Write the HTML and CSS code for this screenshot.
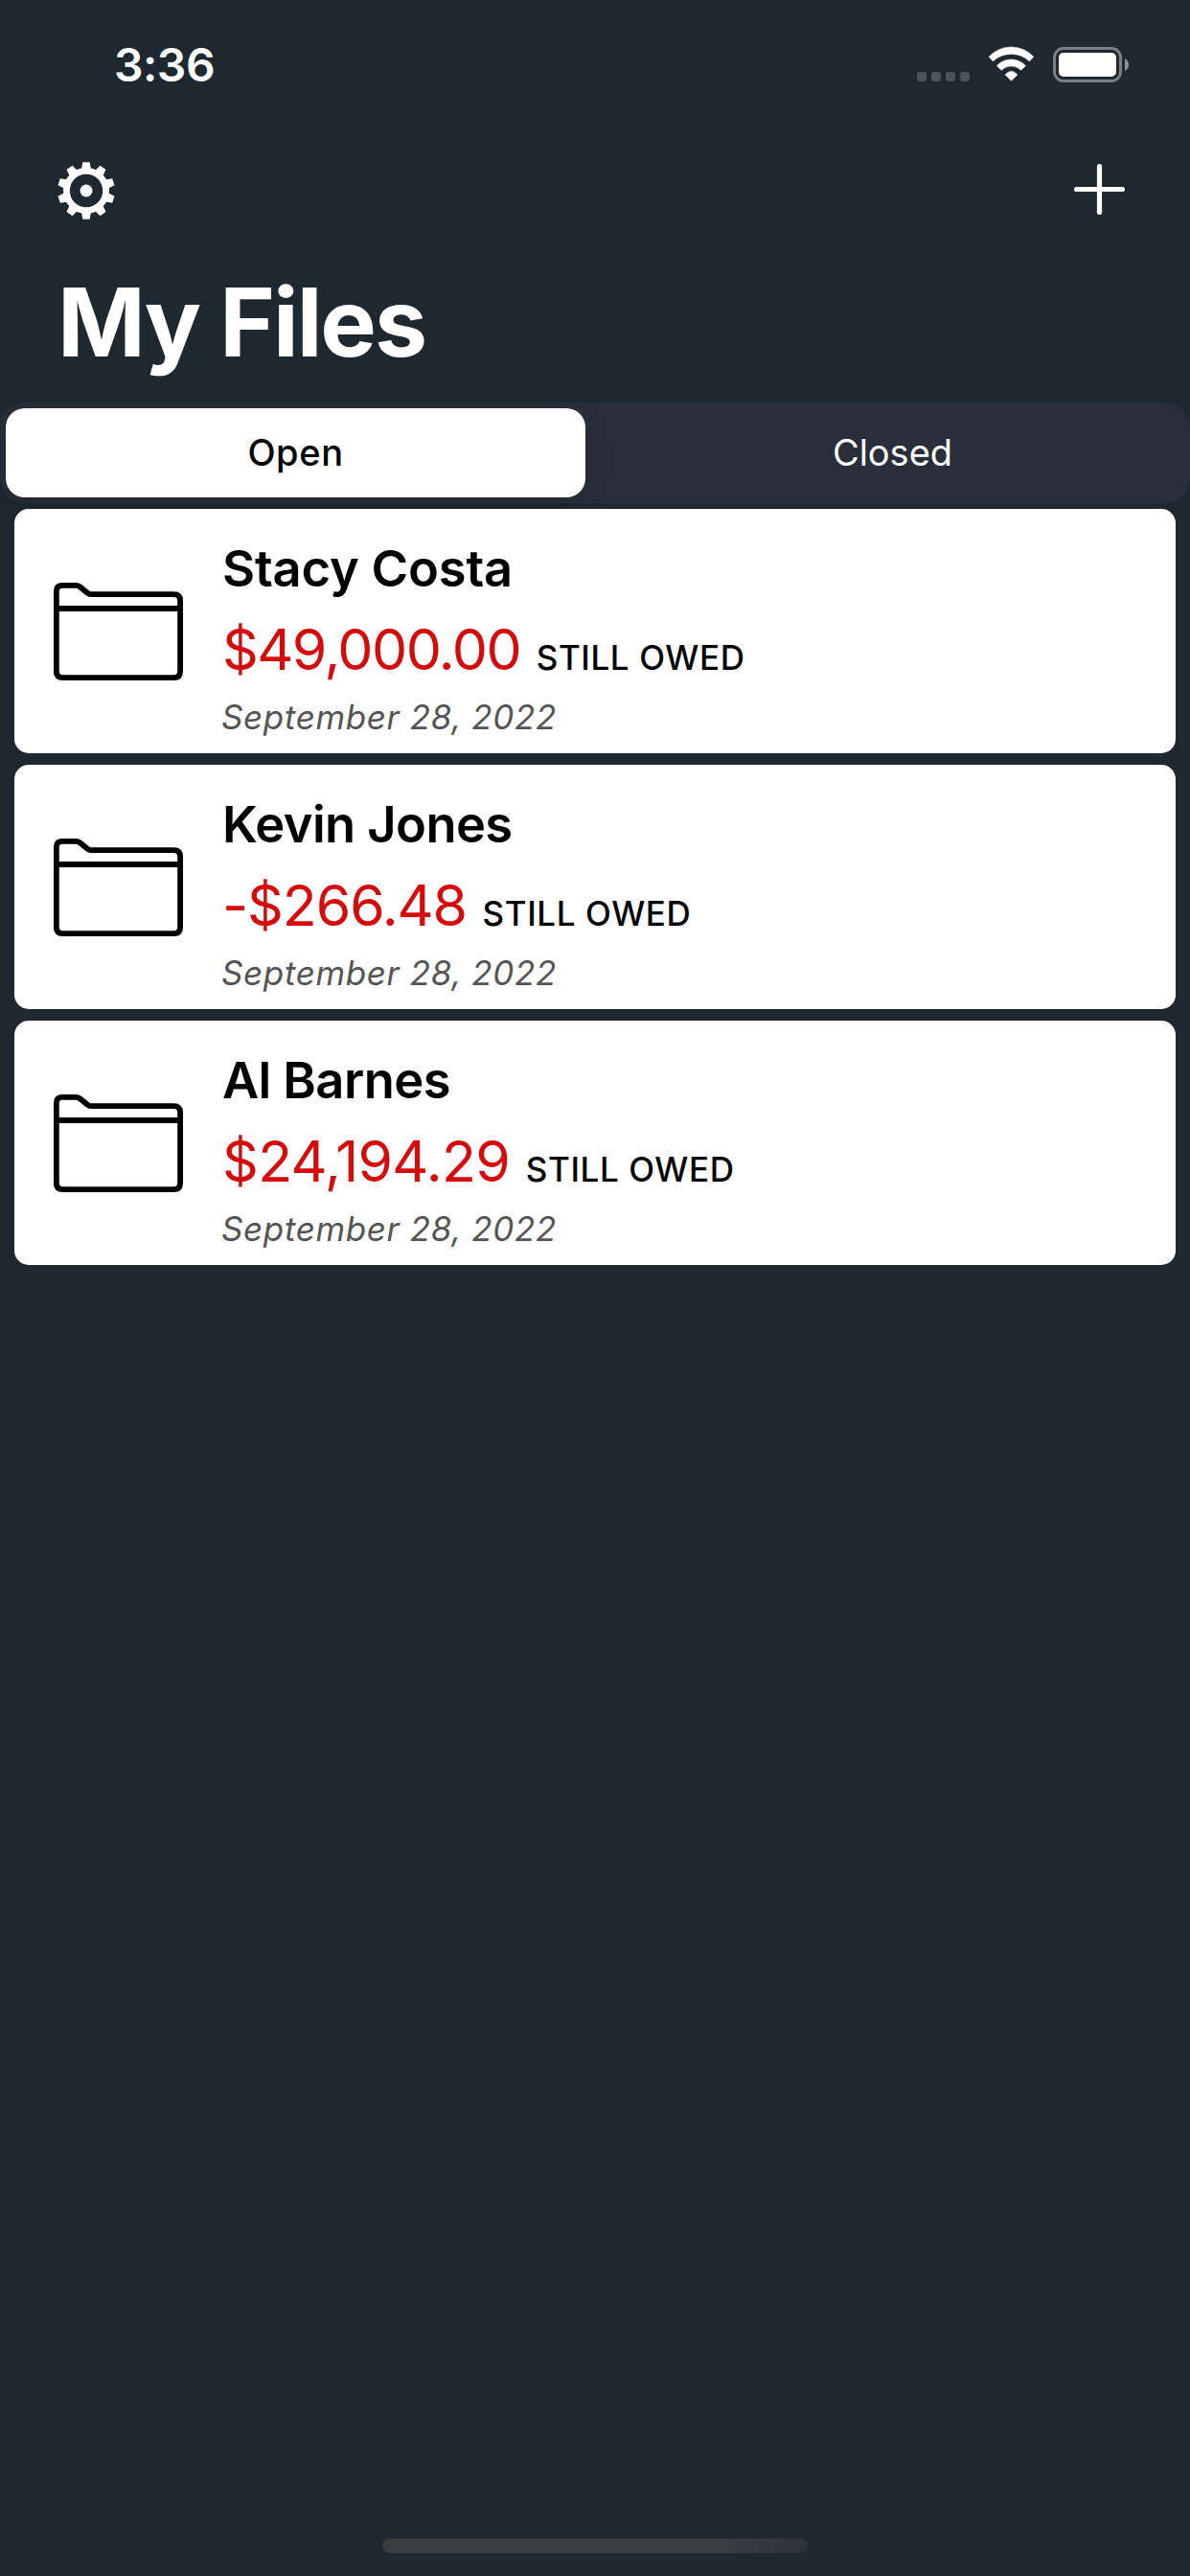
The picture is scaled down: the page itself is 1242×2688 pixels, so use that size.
FILE: index.html
```html
<!DOCTYPE html>
<html lang="en">
<head>
<meta charset="utf-8">
<title>My Files</title>
<link rel="stylesheet" href="styles.css">
</head>
<body>
<svg class="sprite" aria-hidden="true">
  <symbol id="folder" viewBox="0 0 135 102">
    <path d="M2.9 96V9Q2.9 2.9 9 2.9H23.500Q25.500 2.900 27.500 4.400L35 10.600Q37 12.200 39 12.200H125.500Q132.100 12.200 132.100 18.800V92.500Q132.100 99.100 125.500 99.100H9.500Q2.900 99.100 2.900 92.500M2.900 27H132.100" fill="none" stroke="#000" stroke-width="5.800"/>
  </symbol>
</svg>
<div class="screen">
  <header class="status">
    <time class="clock">3:36</time>
    <div class="indicators">
      <div class="signal"><i></i><i></i><i></i><i></i></div>
      <svg class="wifi" viewBox="393 85 147 112" fill="#fff" stroke="#fff" stroke-width="1.500" stroke-linejoin="round">
        <path d="M396 119A94.800 94.800 0 0 1 536.500 119L523 133A82 82 0 0 0 409.500 133Z"/>
        <path d="M421 147A61 61 0 0 1 511.500 147L497 161A43.500 43.500 0 0 0 435.500 161Z"/>
        <path d="M447 175Q466.500 153 486 175L466.500 194Z"/>
      </svg>
      <svg class="battery" viewBox="0 0 79 37">
        <rect x="1.500" y="1.500" width="69" height="34" rx="9.500" fill="none" stroke="#7b8085" stroke-width="3"/>
        <rect x="6" y="6" width="60" height="25" rx="5" fill="#fff"/>
        <path d="M75 12Q79 14.500 79 18.500T75 25Z" fill="#8e9397"/>
      </svg>
    </div>
  </header>
  <nav class="toolbar">
    <svg class="gear" viewBox="-30 -30 60 60" fill="#fff">
      <defs><path id="tooth" d="M-5-22L-3.700-29.800H3.700L5-22Z"/></defs>
      <circle r="20.600" fill="none" stroke="#fff" stroke-width="6.800"/>
      <circle r="6.500"/>
      <use href="#tooth"/>
      <use href="#tooth" transform="rotate(36)"/>
      <use href="#tooth" transform="rotate(72)"/>
      <use href="#tooth" transform="rotate(108)"/>
      <use href="#tooth" transform="rotate(144)"/>
      <use href="#tooth" transform="rotate(180)"/>
      <use href="#tooth" transform="rotate(216)"/>
      <use href="#tooth" transform="rotate(252)"/>
      <use href="#tooth" transform="rotate(288)"/>
      <use href="#tooth" transform="rotate(324)"/>
    </svg>
    <svg class="plus" viewBox="0 0 53 53"><path d="M26.500 2.600V50.400M2.600 26.500H50.400" stroke="#fff" stroke-width="5.200" stroke-linecap="round"/></svg>
  </nav>
  <h1 class="title">My Files</h1>
  <div class="segments">
    <div class="segment selected">Open</div>
    <div class="segment">Closed</div>
  </div>
  <main class="files">
    <article class="card">
      <svg class="folder"><use href="#folder"/></svg>
      <div class="details">
        <h2 class="name">Stacy Costa</h2>
        <p class="balance"><span class="amount">$49,000.00</span><span class="label">STILL OWED</span></p>
        <p class="date">September 28, 2022</p>
      </div>
    </article>
    <article class="card">
      <svg class="folder"><use href="#folder"/></svg>
      <div class="details">
        <h2 class="name">Kevin Jones</h2>
        <p class="balance"><span class="amount">-$266.48</span><span class="label">STILL OWED</span></p>
        <p class="date">September 28, 2022</p>
      </div>
    </article>
    <article class="card">
      <svg class="folder"><use href="#folder"/></svg>
      <div class="details">
        <h2 class="name">Al Barnes</h2>
        <p class="balance"><span class="amount">$24,194.29</span><span class="label">STILL OWED</span></p>
        <p class="date">September 28, 2022</p>
      </div>
    </article>
  </main>
  <div class="home"></div>
</div>
</body>
</html>
```
FILE: styles.css
```css
* { box-sizing: border-box; margin: 0; padding: 0; }
body { background: #1e2831; font-family: Inter, "Liberation Sans", sans-serif; color: #fff; }
svg { display: block; flex: none; }
.sprite { width: 0; height: 0; position: absolute; }
.screen { width: 1242px; height: 2688px; display: flex; flex-direction: column; overflow: hidden; }

.status { height: 132px; padding: 0 64px 0 119px; display: flex; justify-content: space-between; }
.clock { font-size: 48px; font-weight: 600; line-height: 135px; letter-spacing: -0.5px; }
.indicators { display: flex; align-items: flex-start; padding-top: 48px; }
.signal { display: flex; gap: 5px; margin: 27px 19px 0 0; }
.signal i { width: 10px; height: 10px; border-radius: 3px; background: #4b545a; }
.wifi { width: 49px; height: 37.3px; margin-right: 19px; }
.battery { width: 79px; height: 37px; margin-top: 1px; }

.toolbar { height: 132px; padding: 37px 68px 0 60px; display: flex; justify-content: space-between; }
.gear { width: 60px; height: 60px; }
.plus { width: 53px; height: 53px; margin-top: 2px; }

.title { height: 156px; padding-left: 60px; font-size: 98.5px; font-weight: 700; line-height: 146px; letter-spacing: -2.04px; }

.segments { height: 105px; padding: 6px; display: flex; gap: 13px; border-radius: 26px; background: #282f3a; }
.segment { flex: 0 0 615px; text-align: center; font-size: 38px; line-height: 93px; }
.segment.selected { flex-basis: 605px; background: #fff; color: #000; border-radius: 20px; font-weight: 500; letter-spacing: 0.6px; box-shadow: 0 9px 24px rgba(0, 0, 0, 0.12); }

.files { padding: 6px 15px; display: flex; flex-direction: column; gap: 12px; }
.card { height: 255px; padding-left: 40.5px; display: flex; background: #fff; color: #000; border-radius: 15px; }
.folder { width: 135px; height: 102px; margin-top: 76.7px; }
.details { margin-left: 41.5px; padding-top: 30px; }
.name { font-size: 52.5px; font-weight: 600; line-height: 64px; letter-spacing: -0.6px; }
.card:first-child .name { letter-spacing: -0.2px; }
.balance { height: 76px; margin-top: 15px; display: flex; align-items: baseline; line-height: 76px; }
.amount { font-size: 59px; letter-spacing: -0.7px; color: #d50b0b; }
.card:first-child .amount { letter-spacing: -1.55px; }
.card:nth-child(2) .amount { letter-spacing: -1.1px; }
.label { margin-left: 16.5px; font-size: 35px; font-weight: 500; line-height: 40px; letter-spacing: 0.6px; }
.date { margin: 10px 0 0 -1px; font-size: 35px; font-style: italic; line-height: 44px; letter-spacing: 0.62px; color: #555; }

.home { width: 444px; height: 15px; margin: auto auto 24px 399px; border-radius: 8px; background: linear-gradient(to right, #3b3d41 80%, #2b333b); }
```
